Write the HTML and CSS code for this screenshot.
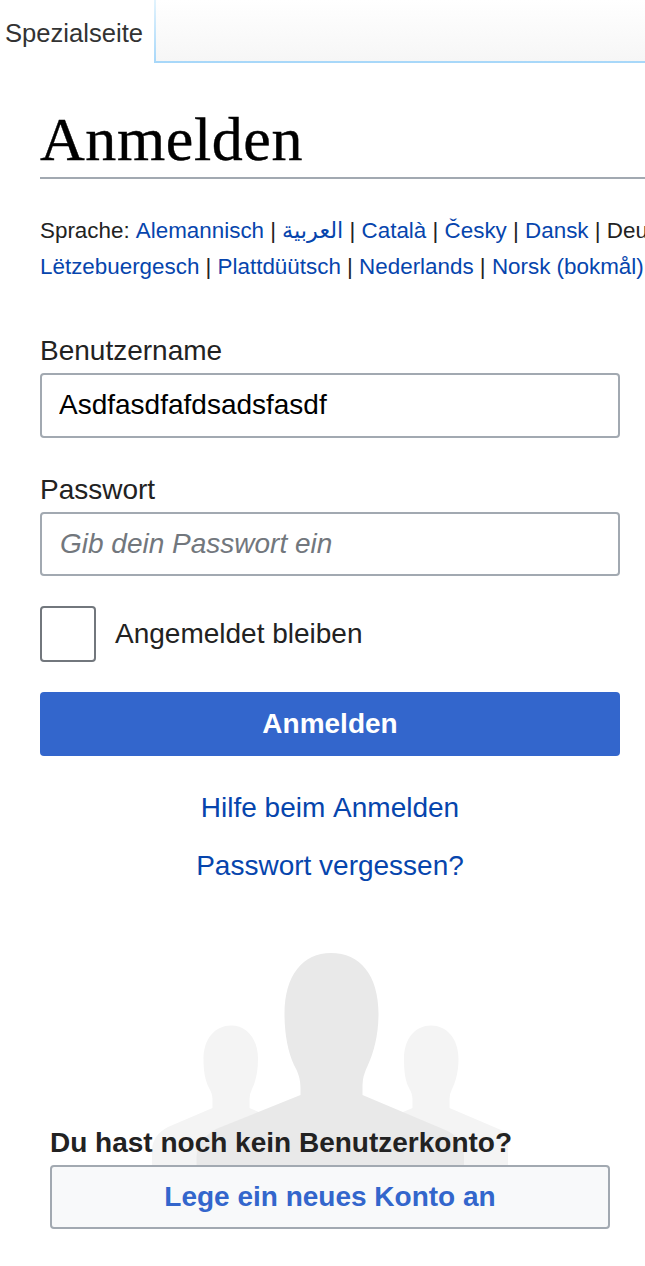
FILE: index.html
```
<!DOCTYPE html>
<html lang="de">
<head>
<meta charset="utf-8">
<title>Anmelden</title>
<link rel="stylesheet" href="styles.css">
</head>
<body>
<header class="tabs">
  <span class="tab">Spezialseite</span>
  <div class="tabs-rest"></div>
</header>
<main class="content">
  <h1 class="title">Anmelden</h1>
  <div class="languages">
    <div class="lang-row">Sprache: <a>Alemannisch</a> | <a class="arabic" lang="ar" dir="rtl">العربية</a> | <a>Català</a> | <a>Česky</a> | <a>Dansk</a> | Deu</div>
    <div class="lang-row"><a>Lëtzebuergesch</a> | <a>Plattdüütsch</a> | <a>Nederlands</a> | <a>Norsk (bokmål)</a></div>
  </div>
  <form class="login">
    <label class="label" for="user">Benutzername</label>
    <input class="input" id="user" type="text" value="Asdfasdfafdsadsfasdf">
    <label class="label" for="pass">Passwort</label>
    <input class="input" id="pass" type="password" placeholder="Gib dein Passwort ein">
    <label class="remember"><input class="checkbox" type="checkbox"><span>Angemeldet bleiben</span></label>
    <button class="submit" type="button">Anmelden</button>
    <a class="help">Hilfe beim Anmelden</a>
    <a class="help">Passwort vergessen?</a>
  </form>
  <section class="signup">
    <div class="signup-head">
      <svg class="people" width="356" height="212" viewBox="0 0 356 212">
        <g fill="#f4f4f4">
          <path d="M79 72.500C95 72.500 106 86 106 106C106 118 104 128 100 136Q97.500 141 97.500 146V155L145 175V212H0V196Q1 182 16 174L60.500 155V146Q60.500 141 57 135C53 127 51.500 118 51.500 106C51.500 86 63 72.500 79 72.500Z"/>
          <path d="M279 72.500C295 72.500 306.500 86 306.500 106C306.500 118 304 128 300 136Q297.500 141 297.500 146V155L342 174L356 180V212H213V175L260.500 155V146Q260.500 141 257 135C253 127 252 118 252 106C252 86 263 72.500 279 72.500Z"/>
        </g>
        <path fill="#e9e9e9" d="M179 0C208 0 226.500 22 226.500 61C226.500 81 222 99 216 112Q210.500 123 210.500 132V142L291 176Q312 184 312 204V212H44.500V204Q45 187 64 176L148.500 142V135C148.500 126 146 119 142 112C136 99 132.500 81 132.500 61C132.500 22 151 0 179 0Z"/>
      </svg>
      <h2 class="question">Du hast noch kein Benutzerkonto?</h2>
    </div>
    <a class="create">Lege ein neues Konto an</a>
  </section>
</main>
</body>
</html>
```
FILE: styles.css
```
* { box-sizing: border-box; }
body {
  margin: 0;
  height: 1266px;
  overflow: hidden;
  background: #fff;
  color: #222;
  font: 28px/32px "Liberation Sans", Arial, sans-serif;
  font-kerning: none;
}
a { color: #0645ad; text-decoration: none; }
.tabs { display: flex; height: 63px; }
.tab {
  width: 154px;
  padding: 17px 0 0 5px;
  color: #333;
  font-size: 25.6px;
  white-space: nowrap;
}
.tabs-rest {
  flex: 1;
  border-left: 2px solid;
  border-bottom: 2px solid #a7d7f9;
  border-image: linear-gradient(#e4f4fd, #a7d7f9) 2;
  background: linear-gradient(#fff, #f6f6f6);
}
.content { padding: 43px 0 0 40px; }
.title {
  margin: 0;
  height: 73px;
  border-bottom: 2px solid #a2a9b1;
  color: #000;
  font: 400 62px/66px "Liberation Serif", Georgia, serif;
  font-kerning: none;
  letter-spacing: 0.6px;
  -webkit-text-stroke: 0.4px #000;
}
.languages {
  padding-top: 34px;
  font-size: 22.4px;
  line-height: 36px;
  white-space: nowrap;
}
.lang-row { height: 36px; }
.arabic {
  display: inline-block;
  width: 61px;
  text-align: center;
  font-family: "DejaVu Sans", sans-serif;
  font-size: 22.4px;
  line-height: 24px;
}
.login { display: flex; flex-direction: column; width: 580px; padding-top: 50px; }
.label { height: 38px; }
.input {
  height: 65px;
  margin: 0 0 36px;
  padding: 0 17px 2px;
  border: 2px solid #a2a9b1;
  border-radius: 4px;
  background: #fff;
  color: #000;
  font: inherit;
}
.input[type="password"] { height: 64px; margin-bottom: 30px; padding: 0 18px; }
.input::placeholder { color: #72777d; opacity: 1; font-style: italic; }
.remember { display: flex; align-items: center; gap: 19px; height: 56px; margin-bottom: 30px; }
.checkbox {
  appearance: none;
  width: 56px;
  height: 56px;
  margin: 0;
  border: 2px solid #72777d;
  border-radius: 4px;
  background: #fff;
}
.submit {
  height: 64px;
  margin: 0 0 36px;
  padding: 0;
  border: 0;
  border-radius: 4px;
  background: #36c;
  color: #fff;
  font: bold 28px/32px "Liberation Sans", Arial, sans-serif;
}
.help { margin-bottom: 26px; text-align: center; }
.signup { width: 560px; margin: 45px 0 0 10px; }
.signup-head { display: grid; height: 212px; }
.people { grid-area: 1 / 1; margin-left: 102px; }
.question {
  grid-area: 1 / 1;
  align-self: end;
  margin: 0 0 6px;
  font: bold 28px/32px "Liberation Sans", Arial, sans-serif;
}
.create {
  display: block;
  height: 64px;
  border: 2px solid #a2a9b1;
  border-radius: 4px;
  background: #f8f9fa;
  color: #36c;
  font-weight: bold;
  line-height: 60px;
  text-align: center;
}
```
